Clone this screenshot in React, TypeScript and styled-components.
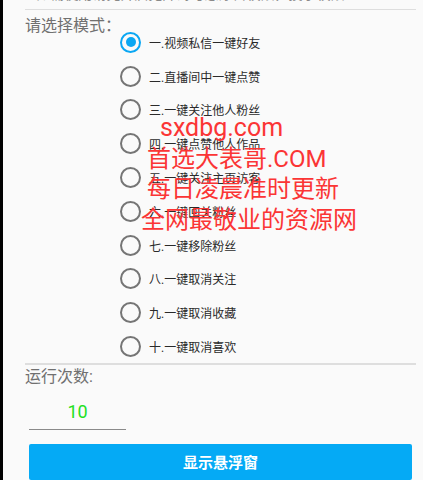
import React from "react";
import styled, { createGlobalStyle } from "styled-components";

const Global = createGlobalStyle`
  html, body { margin: 0; padding: 0; background: #fafafa; }
  body { font-family: Roboto, "Noto Sans CJK SC", sans-serif; overflow: hidden; }
`;

const Screen = styled.div`
  position: relative;
  display: flex;
  width: 423px;
  height: 480px;
  overflow: hidden;
  background: #fafafa;
`;

const EdgeStrip = styled.div`
  flex: 0 0 3px;
  background: #000;
`;

const Content = styled.div`
  flex: 1;
  display: flex;
  flex-direction: column;
  padding: 0 7px 0 22px;
  min-width: 0;
`;

const ClippedNote = styled.div`
  margin-top: -14px;
  height: 16px;
  font-size: 14px;
  line-height: 16px;
  color: #8a8a8a;
  white-space: nowrap;
  overflow: hidden;
`;

const Divider = styled.div<{ $top?: number }>`
  height: 2px;
  background: #dedede;
  margin-top: ${(p) => p.$top ?? 0}px;
`;

const ModeRow = styled.div`
  display: flex;
  align-items: flex-start;
  padding-top: 6px;
`;

const FieldLabel = styled.div`
  font-size: 16px;
  line-height: 20px;
  color: #707070;
  white-space: nowrap;
`;

const ModeLabel = styled(FieldLabel)`
  width: 93px;
  flex: 0 0 93px;
`;

const RadioGroup = styled.div`
  display: flex;
  flex-direction: column;
  padding-top: 9px;
`;

const RadioRow = styled.label`
  display: flex;
  align-items: center;
  height: 33.8px;
  gap: 8px;
  cursor: pointer;
`;

const RadioCircle = styled.span<{ $checked: boolean }>`
  box-sizing: border-box;
  width: 21px;
  height: 21px;
  border-radius: 50%;
  border: 2.2px solid ${(p) => (p.$checked ? "#0aa7f3" : "#757575")};
  display: flex;
  align-items: center;
  justify-content: center;
  margin-left: 2px;
  &::after {
    content: "";
    display: ${(p) => (p.$checked ? "block" : "none")};
    width: 10px;
    height: 10px;
    border-radius: 50%;
    background: #0aa7f3;
  }
`;

const RadioText = styled.span`
  font-size: 12px;
  color: #2a2a2a;
  white-space: nowrap;
`;

const RunsLabel = styled(FieldLabel)`
  margin-top: 2px;
`;

const CountField = styled.div`
  margin: 14px 0 0 4px;
  width: 97px;
  height: 31px;
  box-sizing: border-box;
  border-bottom: 1.5px solid #8a8a8a;
  display: flex;
  align-items: flex-start;
  justify-content: center;
  font-size: 18px;
  line-height: 22px;
  color: #22e022;
`;

const PrimaryButton = styled.button`
  margin: 14px 0 0 4px;
  width: 383px;
  height: 40px;
  border: none;
  border-radius: 2px;
  background: #05aaf5;
  color: #fff;
  font-family: Roboto, "Noto Sans CJK SC", sans-serif;
  font-size: 15px;
  font-weight: 700;
  display: flex;
  align-items: center;
  justify-content: center;
  padding: 0;
`;

const Watermark = styled.div`
  position: absolute;
  left: 141px;
  top: 113px;
  display: flex;
  flex-direction: column;
  color: #fb3535;
  pointer-events: none;
`;

const WatermarkLine = styled.div<{ $indent: number; $size: number }>`
  margin-left: ${(p) => p.$indent}px;
  font-size: ${(p) => p.$size}px;
  line-height: 30.5px;
  white-space: nowrap;
`;

const modes = [
  "一.视频私信一键好友",
  "二.直播间中一键点赞",
  "三.一键关注他人粉丝",
  "四.一键点赞他人作品",
  "五.一键关注主页访客",
  "六.一键回关粉丝",
  "七.一键移除粉丝",
  "八.一键取消关注",
  "九.一键取消收藏",
  "十.一键取消喜欢",
];

export default function App() {
  const [selected, setSelected] = React.useState(0);
  return (
    <Screen>
      <Global />
      <EdgeStrip />
      <Content>
        <ClippedNote>3.如需使用请先开启无障碍与悬浮窗权限，授予权限</ClippedNote>
        <Divider $top={8} />
        <ModeRow>
          <ModeLabel>请选择模式：</ModeLabel>
          <RadioGroup>
            {modes.map((m, i) => (
              <RadioRow key={m} onClick={() => setSelected(i)}>
                <RadioCircle $checked={selected === i} />
                <RadioText>{m}</RadioText>
              </RadioRow>
            ))}
          </RadioGroup>
        </ModeRow>
        <Divider $top={0} />
        <RunsLabel>运行次数:</RunsLabel>
        <CountField>10</CountField>
        <PrimaryButton>显示悬浮窗</PrimaryButton>
      </Content>
      <Watermark>
        <WatermarkLine $indent={19} $size={25}>sxdbg.com</WatermarkLine>
        <WatermarkLine $indent={6} $size={24}>首选大表哥.COM</WatermarkLine>
        <WatermarkLine $indent={6} $size={24}>每日凌晨准时更新</WatermarkLine>
        <WatermarkLine $indent={0} $size={24}>全网最敬业的资源网</WatermarkLine>
      </Watermark>
    </Screen>
  );
}
